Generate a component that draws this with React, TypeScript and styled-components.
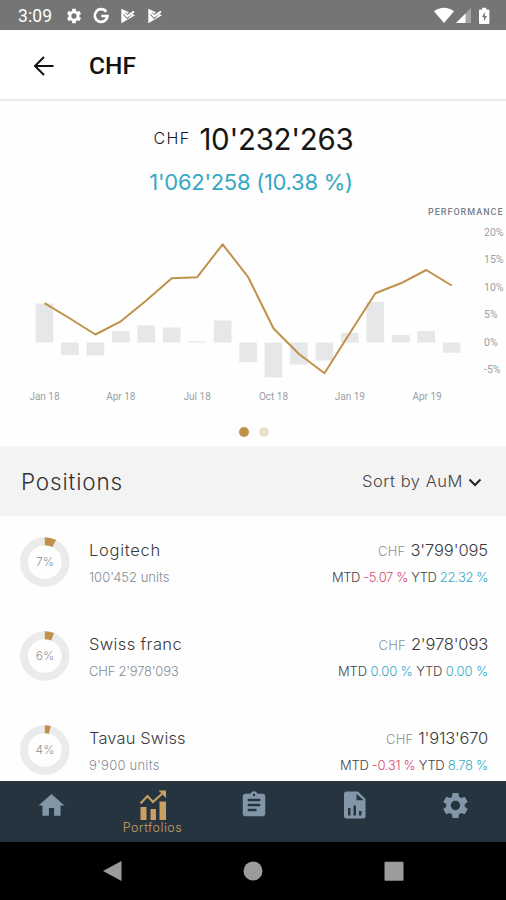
import React from "react";
import styled, { createGlobalStyle } from "styled-components";
import { MdSettings, MdHome, MdAssignment } from "react-icons/md";

const GlobalStyle = createGlobalStyle`
  * { box-sizing: border-box; }
  body { margin: 0; background: #fff; font-family: Inter, "Liberation Sans", sans-serif; }
  svg { display: block; }
`;

const gold = "#c0914a";
const blue = "#35a8c6";
const red = "#d84a70";

const Screen = styled.div`
  width: 506px;
  height: 900px;
  display: flex;
  flex-direction: column;
  overflow: hidden;
  background: #fefefe;
`;

const StatusBar = styled.div`
  flex: none;
  height: 30px;
  padding: 1px 12px 0 18px;
  display: flex;
  align-items: center;
  background: #757575;
  color: #fff;
  font-family: Roboto, sans-serif;
`;

const Clock = styled.span`
  width: 47px;
  font-size: 17.5px;
  letter-spacing: 0.1px;
`;

const StatusIcons = styled.div`
  flex: 1;
  display: flex;
  align-items: center;
  gap: 9px;
`;

const Signals = styled.div`
  display: flex;
  align-items: center;
  gap: 2px;
`;

const AppBar = styled.header`
  flex: none;
  height: 71px;
  padding: 3px 0 0 32px;
  display: flex;
  align-items: center;
  gap: 33px;
  background: #fff;
  border-bottom: 2px solid #ebebeb;
`;

const Title = styled.h1`
  margin: 0;
  font: 500 24.5px/30px Roboto, sans-serif;
  color: #111;
`;

const Hero = styled.section`
  flex: none;
  height: 99px;
  padding-top: 18px;
  display: flex;
  flex-direction: column;
  align-items: center;
`;

const Total = styled.div`
  display: flex;
  align-items: center;
  height: 40px;
  gap: 9px;
  margin-left: 1px;
  color: #161616;
`;

const TotalCurrency = styled.span`
  font-size: 16px;
  font-weight: 300;
  letter-spacing: 1.3px;
  line-height: 20px;
  margin-bottom: 3px;
`;

const TotalAmount = styled.span`
  font-size: 29.5px;
  line-height: 40px;
  letter-spacing: -0.3px;
`;

const Gain = styled.div`
  margin: 9px 4px 0 0;
  font-size: 22px;
  line-height: 28px;
  letter-spacing: -0.28px;
  color: ${blue};
`;

const Chart = styled.svg`
  flex: none;
  width: 506px;
  height: 210px;
  font-family: Roboto, sans-serif;
  font-size: 10px;
  fill: #9a9ea4;
`;

const Dots = styled.div`
  flex: none;
  height: 35.5px;
  padding: 17px 0 0 239px;
  display: flex;
  gap: 10px;
`;

const Dot = styled.span<{ $active?: boolean }>`
  width: 10px;
  height: 10px;
  border-radius: 50%;
  background: ${(p) => (p.$active ? gold : "#e8e2cc")};
`;

const SectionBar = styled.div`
  flex: none;
  height: 70px;
  padding: 0 24px 0 21px;
  display: flex;
  align-items: center;
  justify-content: space-between;
  background: #f3f3f3;
`;

const SectionTitle = styled.h2`
  margin: 1px 0 0;
  font-size: 22.5px;
  font-weight: 300;
  letter-spacing: 0.85px;
  color: #333;
`;

const Sort = styled.button`
  display: flex;
  align-items: center;
  gap: 5px;
  padding: 0;
  border: 0;
  background: none;
  font: 300 16.5px/24px Inter, sans-serif;
  letter-spacing: 0.54px;
  color: #444;
`;

const SortIcon = styled.svg`
  width: 14px;
  height: 10px;
  margin-top: 3px;
`;

const List = styled.main`
  flex: 1;
  min-height: 0;
  overflow: hidden;
`;

const Row = styled.article`
  height: 94px;
  padding: 0 18px 0 20px;
  display: flex;
  align-items: center;
  border-bottom: 1px solid #fbfbfb;
`;

const Ring = styled.svg`
  width: 50px;
  height: 50px;
  margin-right: 19px;
  font-size: 12px;
  fill: #8d9299;
`;

const Column = styled.div<{ $end?: boolean }>`
  flex: ${(p) => (p.$end ? "none" : 1)};
  display: flex;
  flex-direction: column;
  align-items: ${(p) => (p.$end ? "flex-end" : "flex-start")};
  gap: 4px;
  padding-top: 2px;
  white-space: nowrap;
`;

const Name = styled.div<{ $spacing: number }>`
  font-size: 16.5px;
  font-weight: 300;
  line-height: 24px;
  letter-spacing: ${(p) => p.$spacing}px;
  color: #3a3a3a;
`;

const Detail = styled.div<{ $spacing: number }>`
  font-size: 13px;
  font-weight: 300;
  line-height: 22px;
  letter-spacing: ${(p) => p.$spacing}px;
  color: #868d95;
`;

const Value = styled.div`
  display: flex;
  align-items: baseline;
  gap: 5px;
  height: 24px;
`;

const Currency = styled.span`
  font-size: 13px;
  font-weight: 300;
  letter-spacing: 0.2px;
  line-height: 26px;
  color: #8b9199;
`;

const Returns = styled.div<{ $spacing: number }>`
  font-size: 13px;
  font-weight: 300;
  line-height: 22px;
  letter-spacing: ${(p) => p.$spacing}px;
  color: #444;
`;

const Rate = styled.span<{ $negative: boolean }>`
  color: ${(p) => (p.$negative ? red : blue)};
`;

const TabBar = styled.nav`
  flex: none;
  height: 61.5px;
  padding-left: 1px;
  display: grid;
  grid-template-columns: repeat(5, 1fr);
  background: #263440;
  color: #8296a8;
`;

const Tab = styled.div<{ $active?: boolean }>`
  display: flex;
  flex-direction: column;
  align-items: center;
  padding-top: ${(p) => (p.$active ? 8 : 9)}px;
  color: ${(p) => (p.$active ? "#c9a062" : "inherit")};
  font-size: 12.5px;
  font-weight: 300;
  line-height: 13px;
  letter-spacing: 0.5px;
`;

const SystemBar = styled.footer`
  flex: none;
  height: 58px;
  display: flex;
  align-items: center;
  justify-content: space-between;
  padding: 0 102px;
  background: #000;
`;

const labelX = [44.5, 120.8, 197.2, 273.5, 349.8, 427];
const months = ["Jan 18", "Apr 18", "Jul 18", "Oct 18", "Jan 19", "Apr 19"];
const scale = ["20%", "15%", "10%", "5%", "0%", "-5%"];
const bars = [
  [303.5, 342.5], [342.5, 355], [342.5, 355.5], [331, 342.5], [325.5, 342.5], [327.5, 342.5],
  [341.3, 342.5], [320.5, 342.5], [342.5, 362], [342.5, 377.5], [342.5, 364.5], [342.5, 360.5],
  [332.7, 342.5], [302, 342.5], [335, 342.5], [331, 342.5], [342.5, 352.7],
];
const line = [303.2, 318.5, 334.5, 321.3, 300.5, 278.3, 277.2, 244.3, 277, 328.5, 354, 373.2, 333, 293.3, 283.3, 270, 285.5];
const step = 25.45;

const PerformanceChart = () => (
  <Chart viewBox="0 200 506 210">
    <text x="428" y="214.6" fontSize="9" fontWeight="500" textLength="74.5" fill="#77808c">PERFORMANCE</text>
    {bars.map(([top, bottom], i) => (
      <rect key={i} x={35.6 + i * step} y={top} width="17.7" height={bottom - top} fill="#e6e7e9" />
    ))}
    <polyline
      points={line.map((y, i) => `${44.5 + i * step},${y}`).join(" ")}
      fill="none"
      stroke={gold}
      strokeWidth="2"
      strokeLinejoin="round"
    />
    {months.map((m, i) => (
      <text key={m} x={labelX[i]} y="400" textAnchor="middle">{m}</text>
    ))}
    {scale.map((s, i) => (
      <text key={s} x="484" y={236 + i * 27.4} fontSize="10.5">{s}</text>
    ))}
  </Chart>
);

const Allocation = ({ percent, sweep }: { percent: number; sweep: number }) => {
  const a = (sweep * Math.PI) / 180;
  const x = 24.8 + 20.8 * Math.sin(a);
  const y = 25 - 20.8 * Math.cos(a);
  return (
    <Ring viewBox="0 0 50 50">
      <circle cx="24.8" cy="25" r="20.8" fill="none" stroke="#ebebeb" strokeWidth="8" />
      <path d={`M24.8 4.2A20.8 20.8 0 0 1 ${x} ${y}`} fill="none" stroke={gold} strokeWidth="8" />
      <text x="25" y="29" textAnchor="middle" fontWeight="300">{percent}%</text>
    </Ring>
  );
};

const positions = [
  { name: "Logitech", ns: 0.73, detail: "100'452 units", ds: 0.0, pct: 7, sweep: 27, value: "3'799'095", vs: -0.1, mtd: "-5.07 %", ytd: "22.32 %", rs: -0.4 },
  { name: "Swiss franc", ns: 0.36, detail: "CHF 2'978'093", ds: -0.22, pct: 6, sweep: 22, value: "2'978'093", vs: -0.16, mtd: "0.00 %", ytd: "0.00 %", rs: -0.13 },
  { name: "Tavau Swiss", ns: 0.13, detail: "9'900 units", ds: 0.24, pct: 4, sweep: 14, value: "1'913'670", vs: -0.22, mtd: "-0.31 %", ytd: "8.78 %", rs: -0.3 },
];

const PlayCheck = () => (
  <svg width="18" height="18" viewBox="0 0 18 18">
    <path d="M2.3 1.8L16 8.2 2.3 16.2z" fill="#fff" />
    <path d="M5.3 6.6l3 3 6.500-6.500" fill="none" stroke="#757575" strokeWidth="3.6" />
    <path d="M5.300 6.400l3 3L15 4.500" fill="none" stroke="#fff" strokeWidth="2" />
  </svg>
);

export default function App() {
  return (
    <Screen>
      <GlobalStyle />
      <StatusBar>
        <Clock>3:09</Clock>
        <StatusIcons>
          <MdSettings size={18} />
          <svg width="18" height="18" viewBox="0 0 18 18">
            <path d="M14.2 4.8A6.3 6.3 0 1 0 15.4 9H9.3" fill="none" stroke="#fff" strokeWidth="2.7" />
          </svg>
          <PlayCheck />
          <PlayCheck />
        </StatusIcons>
        <Signals>
          <svg width="20" height="17" viewBox="0 0 20 17">
            <path d="M0 4.200C5.700-.5 14.300-.5 20 4.200L10 16z" fill="#fff" />
          </svg>
          <svg width="16" height="17" viewBox="0 0 16 17">
            <path d="M15 1v15H0z" fill="#a5a5a5" />
            <path d="M9.500 6.500V16H0z" fill="#fff" />
          </svg>
          <svg width="20" height="18" viewBox="0 0 20 18">
            <path d="M8.200 2.400V.8h4v1.600h2.200q1 0 1 1V16q0 1-1 1H6q-1 0-1-1V3.400q0-1 1-1z" fill="#fff" />
            <path d="M10.800 5L7.900 10h2v4.200l3-5.200h-2.100z" fill="#757575" />
          </svg>
        </Signals>
      </StatusBar>
      <AppBar>
        <svg width="24" height="24" viewBox="0 0 24 24" fill="none" stroke="#111" strokeWidth="2">
          <path d="M21.500 12H3.800M12 3L3 12l9 9" />
        </svg>
        <Title>CHF</Title>
      </AppBar>
      <Hero>
        <Total>
          <TotalCurrency>CHF</TotalCurrency>
          <TotalAmount>10'232'263</TotalAmount>
        </Total>
        <Gain>1'062'258 (10.38 %)</Gain>
      </Hero>
      <PerformanceChart />
      <Dots>
        <Dot $active />
        <Dot />
      </Dots>
      <SectionBar>
        <SectionTitle>Positions</SectionTitle>
        <Sort>
          Sort by AuM
          <SortIcon viewBox="0 0 14 10" fill="none" stroke="#222" strokeWidth="2">
            <path d="M1.500 2.500L7 8l5.500-5.500" />
          </SortIcon>
        </Sort>
      </SectionBar>
      <List>
        {positions.map((p) => (
          <Row key={p.name}>
            <Allocation percent={p.pct} sweep={p.sweep} />
            <Column>
              <Name $spacing={p.ns}>{p.name}</Name>
              <Detail $spacing={p.ds}>{p.detail}</Detail>
            </Column>
            <Column $end>
              <Value>
                <Currency>CHF</Currency>
                <Name $spacing={p.vs}>{p.value}</Name>
              </Value>
              <Returns $spacing={p.rs}>
                MTD <Rate $negative={p.mtd.startsWith("-")}>{p.mtd}</Rate> YTD{" "}
                <Rate $negative={p.ytd.startsWith("-")}>{p.ytd}</Rate>
              </Returns>
            </Column>
          </Row>
        ))}
      </List>
      <TabBar>
        <Tab><MdHome size={31} /></Tab>
        <Tab $active>
          <svg width="30" height="32" viewBox="0 0 30 32" fill="currentColor">
            <path d="M2.500 18h6v13h-6zM12.500 20h5.500v11h-5.500zM21.500 12.500h6.500V31h-6.500z" />
            <path d="M2.500 14.500l7-7.500 5.500 6L26 3" fill="none" stroke="currentColor" strokeWidth="2" />
            <path d="M20.500 1.500H28V9z" />
          </svg>
          Portfolios
        </Tab>
        <Tab><MdAssignment size={30} /></Tab>
        <Tab>
          <svg width="24" height="30" viewBox="0 0 24 30">
            <path d="M3.500 1.500H15l7.500 7.500v17q0 2.500-2.500 2.500H3.500Q1 28.500 1 26V4q0-2.500 2.500-2.500z" fill="currentColor" />
            <path d="M13.500 3.800V10.300H20.500zM5 18h2.500v7.500H5zM10.500 15.500H13v10h-2.500zM16 21h2.500v4.500H16z" fill="#263440" />
          </svg>
        </Tab>
        <Tab><MdSettings size={31} /></Tab>
      </TabBar>
      <SystemBar>
        <svg width="20" height="22" viewBox="0 0 20 22"><path d="M19.500 1v20L1 11z" fill="#9b9b9b" /></svg>
        <svg width="20" height="20" viewBox="0 0 20 20"><circle cx="10" cy="10" r="9.500" fill="#9b9b9b" /></svg>
        <svg width="20" height="20" viewBox="0 0 20 20"><rect x=".5" y=".8" width="19" height="19" rx="1" fill="#9b9b9b" /></svg>
      </SystemBar>
    </Screen>
  );
}
